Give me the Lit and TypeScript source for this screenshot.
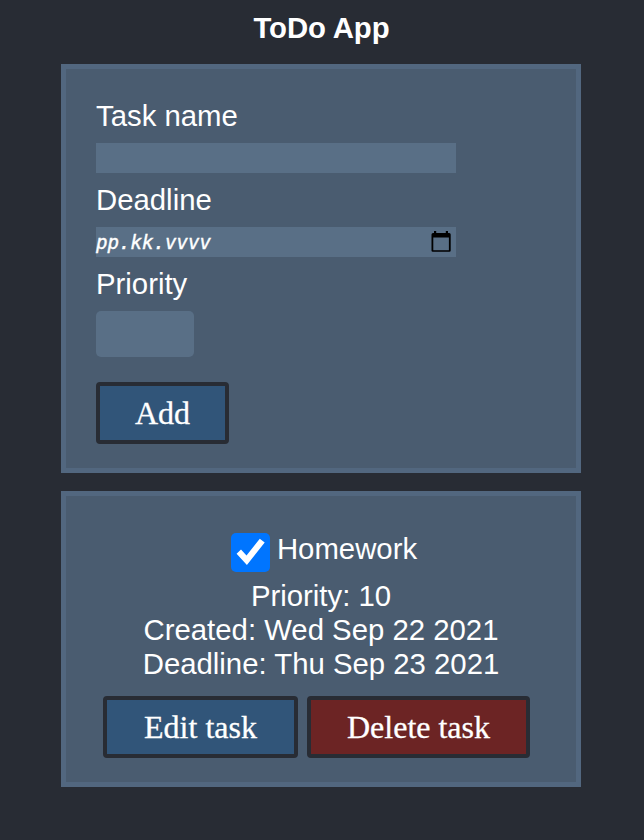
import { LitElement, html, css } from "lit";
import { customElement, property } from "lit/decorators.js";

@customElement("app-button")
class AppButton extends LitElement {
  @property() label = "";
  @property({ reflect: true }) kind = "primary";

  static styles = css`
    :host { display: block; height: 62px; }
    .button {
      display: block;
      box-sizing: border-box;
      width: 100%;
      height: 100%;
      margin: 0;
      padding: 0;
      border: 4px solid #282c34;
      border-radius: 4px;
      background: #315579;
      color: #fff;
      font: 32px/54px "Liberation Serif", serif;
      -webkit-text-stroke: 0.3px #fff;
      text-align: center;
      white-space: nowrap;
    }
    :host([kind="danger"]) .button { background: #6c2424; }
  `;

  render() {
    return html`<button class="button">${this.label}</button>`;
  }
}

@customElement("app-root")
class AppRoot extends LitElement {
  static styles = css`
    :host {
      display: block;
      box-sizing: border-box;
      height: 840px;
      padding: 11px 63px 0 61px;
      overflow: hidden;
      background: #282c34;
      color: #fff;
      font: 29.33px/34px "Liberation Sans", Arial, sans-serif;
    }
    .title { margin: 0 0 19px; padding-left: 1px; font-size: 29.33px; line-height: 34px; font-weight: 700; letter-spacing: -0.1px; text-align: center; }
    .card { box-sizing: border-box; width: 520px; border: 5px solid #52677f; background: #4a5c70; }
    .form { height: 409px; padding: 30px; }
    .label { display: block; margin-bottom: 10px; }
    .field {
      display: flex;
      align-items: center;
      justify-content: space-between;
      box-sizing: border-box;
      width: 360px;
      height: 30px;
      margin-bottom: 10px;
      padding-right: 5px;
      background: #596f86;
    }
    .date { padding-top: 2px; font: italic 19.1px/30px "DejaVu Sans Mono", monospace; -webkit-text-stroke: 0.4px #fff; }
    .priority { width: 98px; height: 46px; margin-bottom: 25px; border-radius: 5px; }
    .calendar { display: block; width: 20px; height: 22px; margin-bottom: 2px; }
    .add { width: 133px; }
    .task { height: 296px; margin-top: 18px; padding-top: 36px; text-align: center; }
    .head { display: flex; justify-content: center; height: 47px; }
    .check { display: block; width: 39px; height: 39px; margin: 1px 7px 0 6px; }
    .line { margin: 0; }
    .actions { display: flex; gap: 9px; margin: 15px 0 0 37px; }
    .edit { width: 195px; }
    .delete { width: 223px; }
  `;

  render() {
    return html`
      <h1 class="title">ToDo App</h1>
      <section class="card form">
        <span class="label">Task name</span>
        <div class="field"></div>
        <span class="label">Deadline</span>
        <div class="field">
          <span class="date">pp.kk.vvvv</span>
          <svg class="calendar" viewBox="0 0 20 22">
            <path fill="#000" fill-rule="evenodd" d="M3 1h2.2v2h9.600V1H17v2h1.200Q19.700 3 19.700 4.500v16q0 1.300-1.300 1.300H1.800Q.5 21.800 .5 20.500V4.500Q.5 3 2 3h1zM2.300 7.500v12.700h15.600V7.500z"/>
          </svg>
        </div>
        <span class="label">Priority</span>
        <div class="field priority"></div>
        <app-button class="add" label="Add"></app-button>
      </section>
      <section class="card task">
        <div class="head">
          <svg class="check" viewBox="0 0 39 39">
            <rect width="39" height="39" rx="5" fill="#0075ff"/>
            <path fill="#fff" d="M5.600 20.700 10 16.500 15.500 22.500 28.800 5.700 33.700 9.500 15.900 32z"/>
          </svg>
          <span>Homework</span>
        </div>
        <p class="line">Priority: 10</p>
        <p class="line">Created: Wed Sep 22 2021</p>
        <p class="line">Deadline: Thu Sep 23 2021</p>
        <div class="actions">
          <app-button class="edit" label="Edit task"></app-button>
          <app-button class="delete" kind="danger" label="Delete task"></app-button>
        </div>
      </section>
    `;
  }
}
